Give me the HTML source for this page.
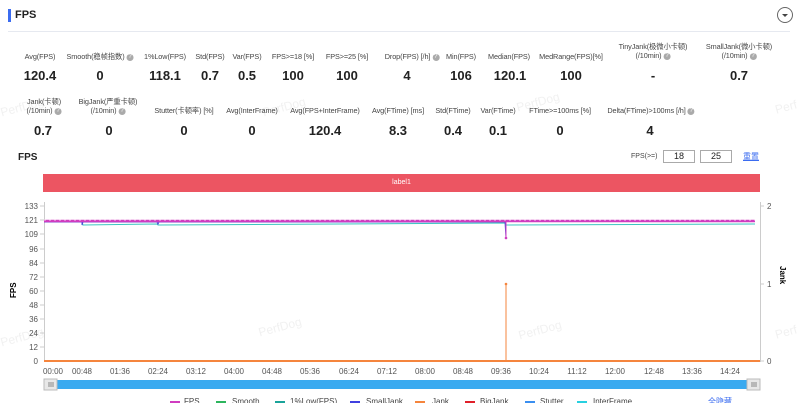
<!DOCTYPE html>
<html><head><meta charset="utf-8"><style>
*{margin:0;padding:0;box-sizing:border-box}
body{width:800px;height:403px;overflow:hidden;background:#fff;font-family:"Liberation Sans","Noto Sans CJK SC",sans-serif;color:#222;position:relative}
.a{position:absolute;white-space:nowrap}
.l{font-size:7.3px;color:#444;transform:translateX(-50%);text-align:center;line-height:9px;letter-spacing:-0.1px}
.v{font-size:13px;font-weight:bold;color:#222;transform:translateX(-50%)}
.q{display:inline-block;width:7px;height:7px;border-radius:50%;background:#aaa;color:#fff;font-size:6px;line-height:7px;text-align:center;vertical-align:middle}
.wm{position:absolute;color:#f1f1f1;font-size:12px;transform:rotate(-15deg)}
</style></head><body>
<div class="a" style="left:8px;top:9px;width:3px;height:13px;background:#3b6cf0"></div>
<div class="a" style="left:15px;top:9px;font-size:11px;font-weight:bold">FPS</div>
<div class="a" style="left:8px;top:31px;width:782px;height:1px;background:#e6e9f0"></div>
<div class="a" style="left:777px;top:7px;width:16px;height:16px;border:1px solid #666;border-radius:50%"></div>
<div class="a" style="left:782px;top:14px;width:0;height:0;border-left:3px solid transparent;border-right:3px solid transparent;border-top:3px solid #444"></div>

<div class="wm" style="left:0px;top:330px">PerfDog</div>
<div class="wm" style="left:258px;top:320px">PerfDog</div>
<div class="wm" style="left:518px;top:323px">PerfDog</div>
<div class="wm" style="left:775px;top:325px">Perf</div>
<div class="wm" style="left:0px;top:100px">PerfDog</div>
<div class="wm" style="left:262px;top:100px">PerfDog</div>
<div class="wm" style="left:516px;top:95px">PerfDog</div>
<div class="wm" style="left:775px;top:100px">Perf</div>

<div class="a l" style="left:40px;top:52px">Avg(FPS)</div>
<div class="a l" style="left:100px;top:52px">Smooth(稳帧指数) <span class="q">?</span></div>
<div class="a l" style="left:165px;top:52px">1%Low(FPS)</div>
<div class="a l" style="left:210px;top:52px">Std(FPS)</div>
<div class="a l" style="left:247px;top:52px">Var(FPS)</div>
<div class="a l" style="left:293px;top:52px">FPS>=18 [%]</div>
<div class="a l" style="left:347px;top:52px">FPS>=25 [%]</div>
<div class="a l" style="left:412px;top:52px">Drop(FPS) [/h] <span class="q">?</span></div>
<div class="a l" style="left:461px;top:52px">Min(FPS)</div>
<div class="a l" style="left:509px;top:52px">Median(FPS)</div>
<div class="a l" style="left:571px;top:52px">MedRange(FPS)[%]</div>
<div class="a l" style="left:653px;top:42px">TinyJank(极微小卡顿)<br>(/10min) <span class="q">?</span></div>
<div class="a l" style="left:739px;top:42px">SmallJank(微小卡顿)<br>(/10min) <span class="q">?</span></div>

<div class="a v" style="left:40px;top:68px">120.4</div>
<div class="a v" style="left:100px;top:68px">0</div>
<div class="a v" style="left:165px;top:68px">118.1</div>
<div class="a v" style="left:210px;top:68px">0.7</div>
<div class="a v" style="left:247px;top:68px">0.5</div>
<div class="a v" style="left:293px;top:68px">100</div>
<div class="a v" style="left:347px;top:68px">100</div>
<div class="a v" style="left:407px;top:68px">4</div>
<div class="a v" style="left:461px;top:68px">106</div>
<div class="a v" style="left:510px;top:68px">120.1</div>
<div class="a v" style="left:571px;top:68px">100</div>
<div class="a v" style="left:653px;top:68px">-</div>
<div class="a v" style="left:739px;top:68px">0.7</div>

<div class="a l" style="left:44px;top:97px">Jank(卡顿)<br>(/10min) <span class="q">?</span></div>
<div class="a l" style="left:108px;top:97px">BigJank(严重卡顿)<br>(/10min) <span class="q">?</span></div>
<div class="a l" style="left:184px;top:106px">Stutter(卡顿率) [%]</div>
<div class="a l" style="left:252px;top:106px">Avg(InterFrame)</div>
<div class="a l" style="left:325px;top:106px">Avg(FPS+InterFrame)</div>
<div class="a l" style="left:398px;top:106px">Avg(FTime) [ms]</div>
<div class="a l" style="left:453px;top:106px">Std(FTime)</div>
<div class="a l" style="left:498px;top:106px">Var(FTime)</div>
<div class="a l" style="left:560px;top:106px">FTime>=100ms [%]</div>
<div class="a l" style="left:651px;top:106px">Delta(FTime)>100ms [/h] <span class="q">?</span></div>

<div class="a v" style="left:43px;top:123px">0.7</div>
<div class="a v" style="left:109px;top:123px">0</div>
<div class="a v" style="left:184px;top:123px">0</div>
<div class="a v" style="left:252px;top:123px">0</div>
<div class="a v" style="left:325px;top:123px">120.4</div>
<div class="a v" style="left:398px;top:123px">8.3</div>
<div class="a v" style="left:453px;top:123px">0.4</div>
<div class="a v" style="left:498px;top:123px">0.1</div>
<div class="a v" style="left:560px;top:123px">0</div>
<div class="a v" style="left:650px;top:123px">4</div>

<div class="a" style="left:18px;top:152px;font-size:10px;font-weight:bold">FPS</div>
<div class="a" style="left:631px;top:153px;font-size:7px;color:#444">FPS(>=)</div>
<div class="a" style="left:663px;top:150px;width:32px;height:13px;border:1px solid #aaa;font-size:9px;text-align:center;line-height:11px">18</div>
<div class="a" style="left:700px;top:150px;width:32px;height:13px;border:1px solid #aaa;font-size:9px;text-align:center;line-height:11px">25</div>
<div class="a" style="left:743px;top:151px;font-size:8px;color:#3b6cf0;text-decoration:underline">重置</div>

<div class="a" style="left:43px;top:174px;width:717px;height:18px;background:#ec5562;color:#fff;font-size:7px;text-align:center;line-height:18px">label1</div>

<svg class="a" style="left:0;top:0" width="800" height="403" font-family="Liberation Sans, sans-serif">
<g stroke="#ccc" stroke-width="1" fill="none">
<line x1="44.5" y1="202" x2="44.5" y2="362"/>
<line x1="760.5" y1="202" x2="760.5" y2="362"/>
<line x1="44" y1="361.5" x2="760" y2="361.5"/>
</g>
<g font-size="8" fill="#555" text-anchor="end">
<text x="38" y="209">133</text><text x="38" y="223">121</text><text x="38" y="237">109</text><text x="38" y="252">96</text><text x="38" y="266">84</text><text x="38" y="280">72</text><text x="38" y="294">60</text><text x="38" y="308">48</text><text x="38" y="322">36</text><text x="38" y="336">24</text><text x="38" y="350">12</text><text x="38" y="364">0</text>
</g>
<g stroke="#ccc"><line x1="40" y1="206" x2="44" y2="206"/><line x1="40" y1="220" x2="44" y2="220"/><line x1="40" y1="234" x2="44" y2="234"/><line x1="40" y1="249" x2="44" y2="249"/><line x1="40" y1="263" x2="44" y2="263"/><line x1="40" y1="277" x2="44" y2="277"/><line x1="40" y1="291" x2="44" y2="291"/><line x1="40" y1="305" x2="44" y2="305"/><line x1="40" y1="319" x2="44" y2="319"/><line x1="40" y1="333" x2="44" y2="333"/><line x1="40" y1="347" x2="44" y2="347"/><line x1="760" y1="206" x2="764" y2="206"/><line x1="760" y1="284" x2="764" y2="284"/><line x1="760" y1="361" x2="764" y2="361"/></g>
<g font-size="8" fill="#555"><text x="767" y="209">2</text><text x="767" y="287">1</text><text x="767" y="364">0</text></g>
<text x="0" y="0" font-size="8" font-weight="bold" transform="translate(16,298) rotate(-90)">FPS</text>
<text x="0" y="0" font-size="8" font-weight="bold" transform="translate(780,266) rotate(90)">Jank</text>
<g font-size="8" fill="#555" text-anchor="middle">
<text x="53" y="374">00:00</text><text x="82" y="374">00:48</text><text x="120" y="374">01:36</text><text x="158" y="374">02:24</text><text x="196" y="374">03:12</text><text x="234" y="374">04:00</text><text x="272" y="374">04:48</text><text x="310" y="374">05:36</text><text x="349" y="374">06:24</text><text x="387" y="374">07:12</text><text x="425" y="374">08:00</text><text x="463" y="374">08:48</text><text x="501" y="374">09:36</text><text x="539" y="374">10:24</text><text x="577" y="374">11:12</text><text x="615" y="374">12:00</text><text x="654" y="374">12:48</text><text x="692" y="374">13:36</text><text x="730" y="374">14:24</text>
</g>
<polyline fill="none" stroke="#3cc6c0" stroke-width="1" points="44,222 82,222 83,225 157,224 158,225 505,223 506,225 755,224"/>
<polyline fill="none" stroke="#4a4ad8" stroke-width="1" points="44,222 82,222 82,225 83,222 157,222 158,224 159,222 505,222 506,238"/>
<line x1="44" y1="221" x2="755" y2="221" stroke="#d03cc0" stroke-width="2.5"/>
<line x1="44" y1="220" x2="755" y2="220" stroke="#f4c6ee" stroke-width="1" stroke-dasharray="2,3"/>
<line x1="506" y1="221" x2="506" y2="238" stroke="#d03cc0" stroke-width="1"/>
<circle cx="506" cy="238" r="1.3" fill="#d03cc0"/>
<line x1="44" y1="361" x2="760" y2="361" stroke="#f5853d" stroke-width="2"/>
<line x1="506" y1="284" x2="506" y2="361" stroke="#f5853d" stroke-width="1"/>
<circle cx="506" cy="284" r="1.3" fill="#f5853d"/>
<rect x="44" y="380" width="716" height="9" fill="#3aaaf0"/>
<rect x="44" y="379" width="13" height="11" fill="#e8e8e8" stroke="#bbb"/>
<rect x="747" y="379" width="13" height="11" fill="#e8e8e8" stroke="#bbb"/>
<g stroke="#888"><line x1="49" y1="382" x2="49" y2="387"/><line x1="51" y1="382" x2="51" y2="387"/><line x1="53" y1="382" x2="53" y2="387"/><line x1="752" y1="382" x2="752" y2="387"/><line x1="754" y1="382" x2="754" y2="387"/><line x1="756" y1="382" x2="756" y2="387"/></g>
<g font-size="8" fill="#444">
<rect x="170" y="401" width="10" height="3" fill="#d03cc0"/><text x="184" y="404">FPS</text>
<rect x="216" y="401" width="10" height="3" fill="#2db55d"/><text x="232" y="404">Smooth</text>
<rect x="275" y="401" width="10" height="3" fill="#1aa39a"/><text x="290" y="404">1%Low(FPS)</text>
<rect x="350" y="401" width="10" height="3" fill="#4040e0"/><text x="366" y="404">SmallJank</text>
<rect x="415" y="401" width="10" height="3" fill="#f5853d"/><text x="432" y="404">Jank</text>
<rect x="465" y="401" width="10" height="3" fill="#e0202a"/><text x="480" y="404">BigJank</text>
<rect x="525" y="401" width="10" height="3" fill="#3a8ff0"/><text x="540" y="404">Stutter</text>
<rect x="577" y="401" width="10" height="3" fill="#28d0e0"/><text x="593" y="404">InterFrame</text>
<text x="708" y="404" fill="#3b6cf0">全隐藏</text>
</g>
</svg>
</body></html>
